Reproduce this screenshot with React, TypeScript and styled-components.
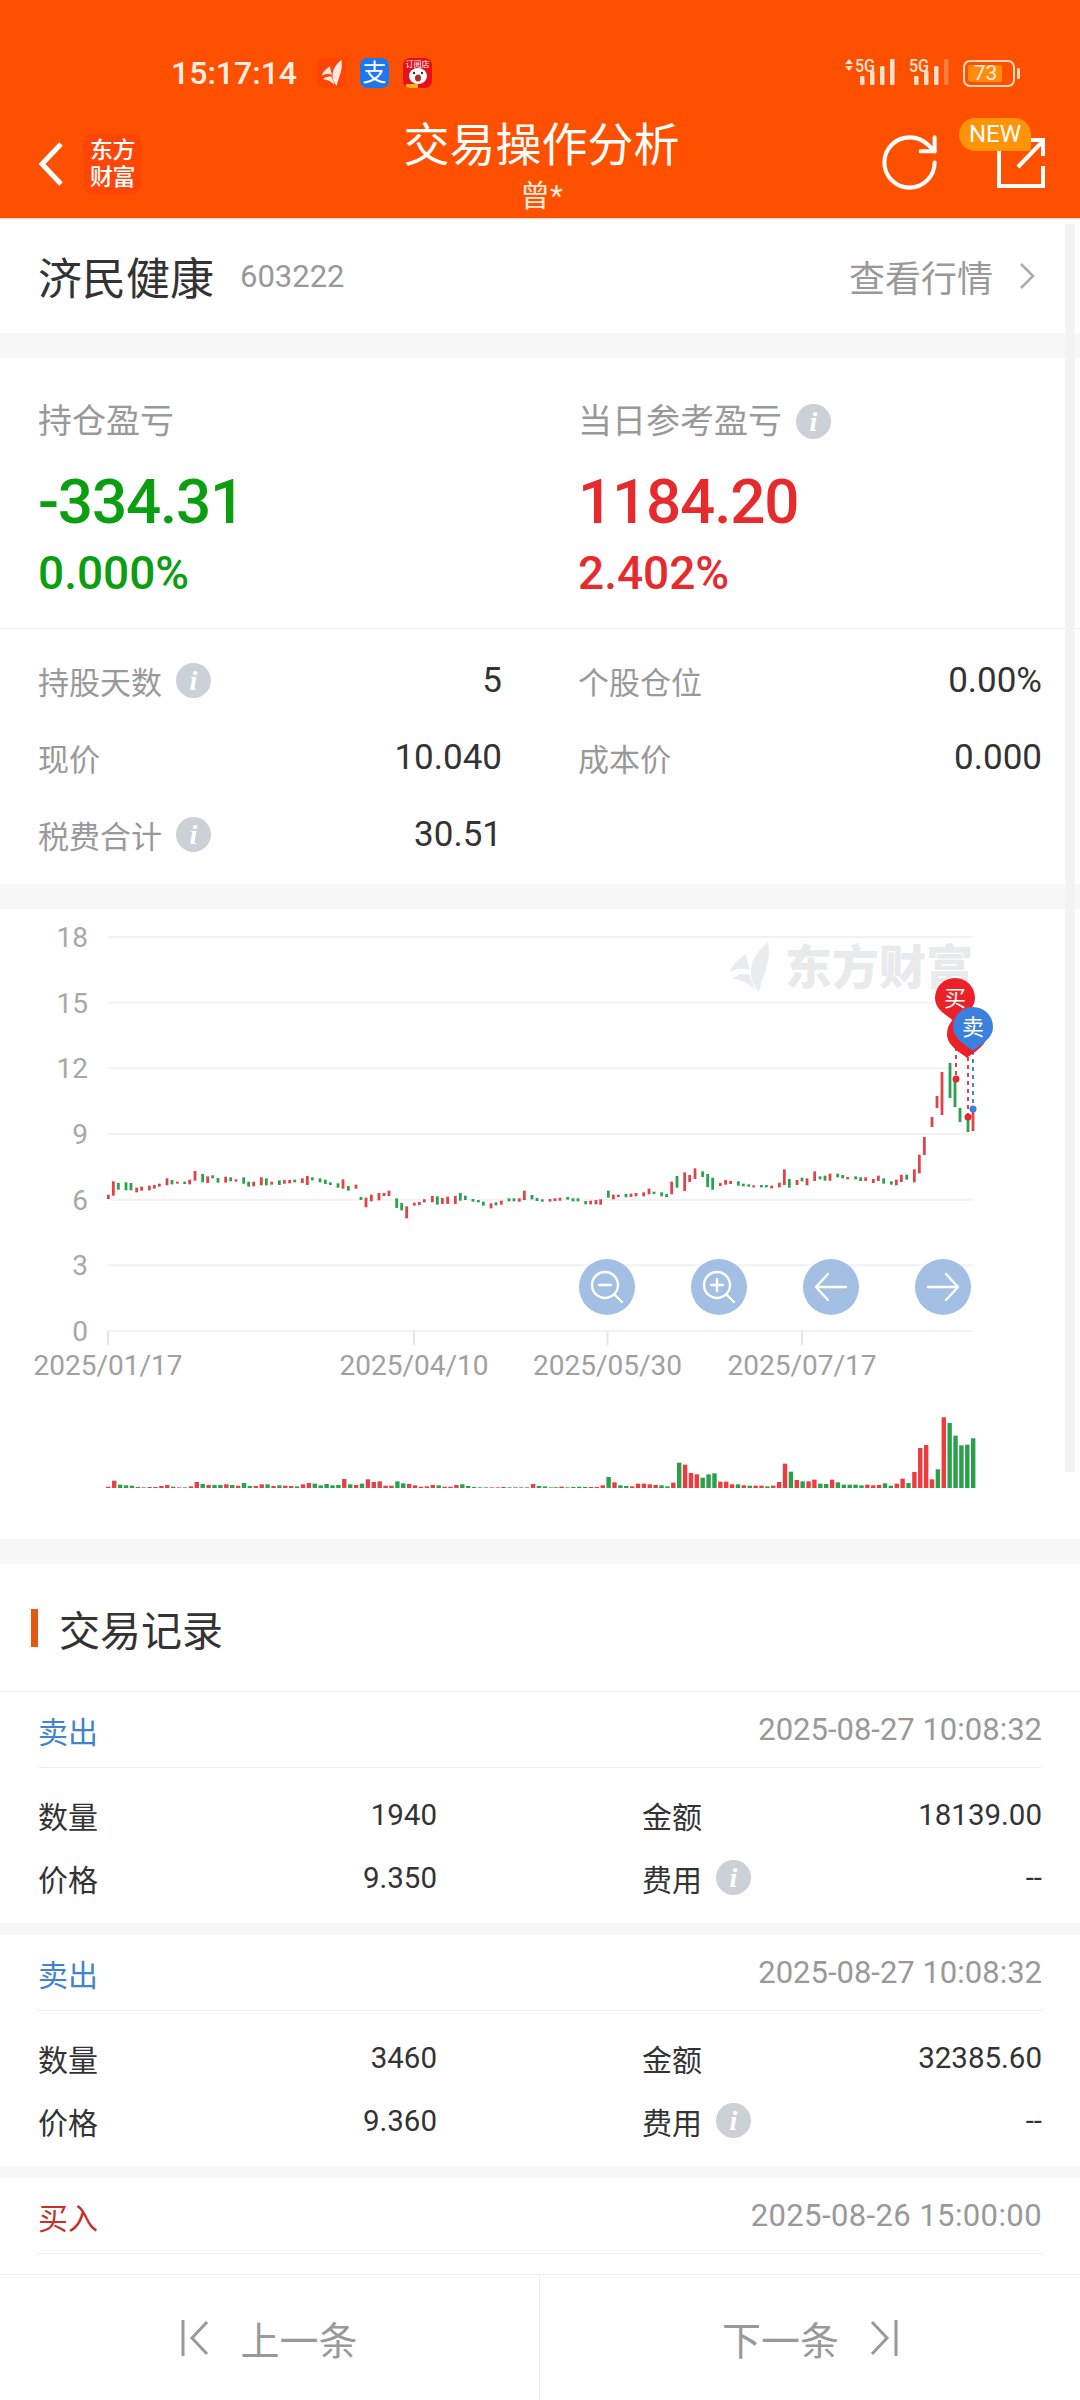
import React from "react";
import styled, { createGlobalStyle } from "styled-components";
import { RotateCw } from "lucide-react";

const Global = createGlobalStyle`
  html, body { margin: 0; padding: 0; background: #fff; }
  body { font-family: Roboto, "Noto Sans CJK SC", sans-serif; }
`;

const Page = styled.div`
  position: relative;
  width: 1080px;
  height: 2400px;
  overflow: hidden;
  display: flex;
  flex-direction: column;
  background: #fff;
`;
const Header = styled.header`
  flex: none;
  height: 219px;
  background: #ff5000;
  color: #fff;
  padding-top: 58px;
  box-sizing: border-box;
  border-bottom: 1px solid #ffd9b8;
`;
const StatusBar = styled.div`
  display: flex;
  align-items: center;
  height: 30px;
  padding: 0 65px 0 171px;
`;
const Clock = styled.span`
  font-size: 32px;
  font-weight: 500;
  color: #ffeee2;
  line-height: 30px;
  margin-right: 20px;
`;
const AppIcons = styled.div`
  display: flex;
  gap: 14px;
`;
const AppBadge = styled.div<{ $bg: string }>`
  width: 29px;
  height: 30px;
  border-radius: 7px;
  background: ${(p) => p.$bg};
  display: flex;
  align-items: center;
  justify-content: center;
  overflow: hidden;
  font-size: 24px;
  line-height: 30px;
  color: #fff;
`;
const StatusRight = styled.div`
  margin-left: auto;
  display: flex;
  align-items: center;
  gap: 8px;
`;
const SignalSvg = styled.svg`
  display: block;
  overflow: visible;
`;
const Battery = styled.div`
  position: relative;
  width: 52px;
  height: 27px;
  box-sizing: border-box;
  border: 2px solid #ffd9bd;
  border-radius: 7px;
  padding: 3px;
  display: flex;
`;
const BatteryFill = styled.div`
  width: 33px;
  background: #ff8c0f;
  border-radius: 2px;
  color: #ffeedd;
  font-size: 21px;
  line-height: 17px;
  text-align: center;
  padding-left: 1px;
`;
const BatteryNub = styled.div`
  position: absolute;
  right: -7px;
  top: 6px;
  width: 3px;
  height: 11px;
  background: #ffd9bd;
  border-radius: 1px;
`;
const Nav = styled.div`
  display: grid;
  grid-template-columns: 1fr auto 1fr;
  height: 100px;
  margin-top: 31px;
  padding: 0 35px 0 38px;
`;
const NavLeft = styled.div`
  display: flex;
  align-items: center;
  gap: 21px;
  padding-bottom: 11px;
`;
const NavLogo = styled.div`
  width: 57px;
  height: 60px;
  border-radius: 8px;
  background: #ff4608;
  display: flex;
  flex-direction: column;
  align-items: center;
  justify-content: center;
  font-size: 23px;
  line-height: 27px;
  font-weight: 500;
  letter-spacing: -0.5px;
`;
const NavCenter = styled.div`
  text-align: center;
`;
const NavTitle = styled.div`
  font-size: 46px;
  line-height: 52px;
`;
const NavSub = styled.div`
  font-size: 30px;
  line-height: 40px;
  margin-top: 5px;
  color: #ffe9da;
`;
const NavRight = styled.div`
  display: flex;
  align-items: center;
  justify-content: flex-end;
  padding-bottom: 14px;
  gap: 54px;
`;
const ShareWrap = styled.div`
  position: relative;
  width: 48px;
  height: 50px;
  margin-top: 2px;
`;
const NewBadge = styled.div`
  position: absolute;
  left: -38px;
  top: -20px;
  width: 72px;
  height: 33px;
  background: #ff9408;
  border-radius: 17px 17px 2px 17px;
  font-size: 24px;
  line-height: 33px;
  text-align: center;
  color: #fff;
`;
const Scrollbar = styled.div`
  position: absolute;
  right: 5px;
  top: 224px;
  width: 10px;
  height: 1248px;
  background: #f3f3f3;
`;
const Body = styled.main`
  flex: 1;
  min-height: 0;
  overflow: hidden;
  background: #f7f7f7;
`;
const NameRow = styled.section`
  height: 114px;
  background: #fff;
  display: flex;
  align-items: center;
  padding: 0 45px 0 38px;
  margin-bottom: 25px;
`;
const StockName = styled.span`
  font-size: 44px;
  color: #333;
`;
const StockCode = styled.span`
  font-size: 31px;
  color: #999;
  margin-left: 26px;
`;
const QuoteLink = styled.span`
  margin-left: auto;
  font-size: 36px;
  color: #999;
  margin-right: 26px;
`;
const Card = styled.section<{ $gap?: number }>`
  background: #fff;
  margin-bottom: ${(p) => p.$gap ?? 25}px;
`;
const TwoCols = styled.div`
  display: grid;
  grid-template-columns: 464px 464px;
  justify-content: space-between;
  padding: 0 38px;
`;
const TopStats = styled(TwoCols)`
  height: 271px;
  box-sizing: border-box;
  padding-top: 40px;
  border-bottom: 1px solid #eee;
`;
const StatLabel = styled.div`
  display: flex;
  align-items: center;
  gap: 14px;
  font-size: 34px;
  line-height: 46px;
  color: #999;
`;
const BigNum = styled.div<{ $c: string }>`
  font-size: 62px;
  font-weight: 500;
  line-height: 70px;
  margin-top: 23px;
  letter-spacing: -1.2px;
  color: ${(p) => p.$c};
`;
const Pct = styled.div<{ $c: string }>`
  font-size: 46px;
  font-weight: 500;
  line-height: 56px;
  margin-top: 8px;
  color: ${(p) => p.$c};
`;
const DetailGrid = styled(TwoCols)`
  padding-top: 13px;
  padding-bottom: 11px;
`;
const DetailRow = styled.div`
  display: flex;
  align-items: center;
  justify-content: space-between;
  height: 77px;
`;
const DetailLabel = styled.span`
  display: flex;
  align-items: center;
  gap: 14px;
  font-size: 31px;
  color: #999;
`;
const DetailValue = styled.span`
  font-size: 35px;
  color: #333;
`;
const InfoDot = styled.span`
  width: 35px;
  height: 35px;
  border-radius: 50%;
  background: #ccd1d8;
  color: #fff;
  font-family: "Liberation Serif", serif;
  font-style: italic;
  font-weight: 700;
  font-size: 28px;
  line-height: 35px;
  text-align: center;
  flex: none;
`;
const ChartCard = styled(Card)`
  position: relative;
  height: 630px;
`;
const ChartSvg = styled.svg`
  display: block;
`;
const ChartButtons = styled.div`
  position: absolute;
  left: 579px;
  top: 350px;
  display: flex;
  gap: 56px;
`;
const RoundBtn = styled.div`
  width: 56px;
  height: 56px;
  border-radius: 50%;
  background: #a3bfe3;
  display: flex;
  align-items: center;
  justify-content: center;
`;
const RecordsHead = styled.div`
  height: 128px;
  display: flex;
  align-items: center;
  padding: 1px 0 0 31px;
  box-sizing: border-box;
  border-bottom: 1px solid #eee;
`;
const TitleBar = styled.span`
  width: 7px;
  height: 38px;
  background: #e2590f;
  margin-right: 21px;
`;
const RecordsTitle = styled.span`
  font-size: 41px;
  color: #333;
`;
const Record = styled.article`
  background: #fff;
  margin-bottom: 12px;
  height: 231px;
  box-sizing: border-box;
  padding: 0 38px;
`;
const LastRecord = styled(Record)`
  height: 96px;
  margin-bottom: 0;
`;
const RecordTop = styled.div`
  height: 75px;
  display: flex;
  align-items: center;
  justify-content: space-between;
  border-bottom: 1px solid #eee;
`;
const Side = styled.span<{ $c: string }>`
  font-size: 30px;
  color: ${(p) => p.$c};
`;
const Stamp = styled.span<{ $spread?: number }>`
  font-size: 31px;
  color: #999;
  letter-spacing: ${(p) => p.$spread ?? 0}px;
`;
const RecordBody = styled.div`
  display: grid;
  grid-template-columns: 399px 400px;
  justify-content: space-between;
  padding-top: 15px;
`;
const RecRow = styled.div`
  display: flex;
  align-items: center;
  justify-content: space-between;
  height: 63px;
`;
const RecLabel = styled.span`
  display: flex;
  align-items: center;
  gap: 14px;
  font-size: 30px;
  color: #333;
`;
const RecValue = styled.span`
  font-size: 29.5px;
  color: #333;
`;
const BottomBar = styled.nav`
  flex: none;
  height: 126px;
  display: grid;
  grid-template-columns: 1fr 1fr;
  background: #fff;
  border-top: 1px solid #eee;
  box-sizing: border-box;
`;
const PagerBtn = styled.div<{ $line?: boolean }>`
  display: flex;
  align-items: center;
  justify-content: center;
  gap: 31px;
  font-size: 39px;
  color: #999;
  border-right: ${(p) => (p.$line ? "1px solid #eee" : "none")};
`;

const RED = "#e0434a";
const GREEN = "#2ba050";

// zoomed coordinates: [x, top, bottom, 1 = red / 0 = green]
const left: number[][] = [[25,227,240,1],[40,187,230,1],[55,192,212,0],[78,190,214,0],[93,192,214,0],[110,206,220,1],[125,203,215,1],[148,200,214,1],[163,198,209,1],[178,194,203,1],[201,178,199,1],[216,183,196,0],[232,188,194,1],[254,188,195,0],[269,182,196,1],[285,156,185,1],[308,165,190,0],[323,172,192,1],[338,169,178,0],[354,177,191,0],[377,173,191,1],[392,175,187,0],[408,181,188,1],[431,175,194,0],[446,188,203,0],[461,188,202,1],[484,175,199,1],[499,178,199,0],[515,188,197,1],[538,184,198,0],[553,183,194,1],[569,183,193,1],[584,182,190,0],[607,178,192,1],[622,171,198,1],[637,175,184,0],[660,178,190,0],[676,182,195,0],[691,190,198,0],[714,193,206,0],[729,181,209,1],[745,201,215,0],[768,197,209,1],[783,234,243,0],[798,236,265,1],[814,227,247,1],[837,222,244,1],[852,222,231,1],[867,215,231,1],[890,238,267,0],[905,252,274,0],[920,262,298,1],[943,251,260,1],[958,249,258,1],[973,241,250,1],[997,231,250,1],[1012,232,257,0],[1027,237,255,1],[1043,233,255,1],[1066,231,255,1],[1081,222,245,0],[1096,230,243,0],[1119,240,248,0],[1135,243,250,0],[1150,248,260,0],[1173,253,268,1],[1188,250,259,0],[1204,245,257,1],[1227,238,247,0],[1242,238,247,0],[1258,238,248,1],[1273,215,243,1],[1296,228,241,0],[1311,237,246,0],[1327,241,248,0],[1350,240,248,1],[1365,238,246,1],[1380,236,245,1],[1403,234,242,0],[1419,238,247,0],[1434,238,247,0],[1457,246,256,0],[1472,245,256,1],[1488,243,256,1]];
const right: number[][] = [[2,241,257,1],[25,215,236,0],[40,227,241,1],[55,227,234,1],[78,225,235,0],[93,224,234,1],[108,222,232,1],[131,220,232,1],[147,209,226,1],[162,218,225,0],[185,220,232,0],[200,225,234,0],[215,188,226,1],[231,171,206,0],[254,160,216,1],[269,168,189,1],[285,148,180,1],[308,157,174,0],[323,165,204,0],[338,176,212,0],[361,192,201,1],[377,183,197,1],[392,186,195,1],[415,187,200,0],[430,194,202,0],[446,196,203,0],[461,199,205,1],[484,198,205,0],[499,198,205,0],[515,200,208,1],[538,191,205,1],[553,151,198,1],[568,180,206,0],[591,183,198,1],[606,176,187,0],[621,178,199,1],[644,157,186,1],[660,172,181,0],[675,170,185,0],[690,164,185,1],[713,164,175,0],[728,168,178,0],[743,174,181,1],[767,172,181,0],[782,175,186,0],[797,175,186,1],[820,180,192,1],[835,170,186,1],[851,178,194,0],[874,187,197,0],[889,182,199,1],[904,167,189,1],[920,167,182,0],[943,151,190,1],[958,107,163,1],[973,54,108,1]];
const tail: number[][] = [[932,1118,1128,1],[937,1097,1109,1],[942,1073,1116,1],[950,1064,1099,0],[955,1077,1108,0],[960,1109,1123,0],[968,1120,1133,0],[973,1112,1132,1]];

const candles: number[][] = [
  ...left.map(([x, t, b, c]) => [100 + x / 3, 1120 + t / 3, 1120 + b / 3, c]),
  ...right.map(([x, t, b, c]) => [600 + x / 3, 1120 + t / 3, 1120 + b / 3, c]),
  ...tail,
];

const volLeft: number[][] = [[4,1],[22,1],[10,0],[8,0],[7,0],[3,1],[2,0],[3,1],[3,1],[6,1],[9,1],[4,0],[2,1],[2,0],[5,1],[18,1],[12,0],[9,1],[9,0],[9,0],[11,1],[9,0],[7,1],[15,0],[6,0],[6,1],[11,1],[11,0],[6,1],[8,0],[7,1],[6,1],[5,0],[11,1],[15,1],[13,0],[8,0],[12,0],[8,0],[9,0],[27,1],[11,0],[9,1],[13,0],[26,1],[18,1],[20,1],[7,1],[7,1],[20,0],[14,0],[12,1],[8,1],[4,1],[5,1],[9,1],[8,0],[4,1],[4,1],[9,1],[11,0],[6,0],[3,0],[2,0],[2,0],[2,1],[2,1],[3,1],[2,0],[2,1],[2,1],[2,0],[12,1],[6,0],[5,0],[2,0],[1,0]];
const volRight: number[][] = [[2,0],[4,1],[2,0],[3,0],[4,0],[3,0],[3,1],[3,1],[8,1],[33,0],[17,1],[8,0],[6,0],[5,1],[13,1],[13,1],[11,1],[9,1],[8,0],[5,0],[16,1],[76,0],[70,1],[45,1],[41,1],[31,0],[41,0],[44,0],[19,1],[19,1],[11,1],[11,0],[8,1],[7,0],[7,1],[7,1],[5,0],[7,1],[18,1],[73,1],[49,0],[24,1],[20,0],[20,1],[25,1],[13,0],[12,0],[25,1],[17,0],[10,0],[10,0],[10,0],[8,0],[10,1],[8,1],[9,1],[14,0],[7,0],[13,1],[28,1],[15,0],[48,1],[120,1],[129,1],[26,1],[56,0],[212,1],[195,0],[157,0],[128,0],[130,0],[149,0]];

const pin = (cx: number, cy: number) =>
  `M${cx} ${cy + 24}C${cx - 7} ${cy + 18} ${cx - 20} ${cy + 12} ${cx - 20} ${cy}A20 20 0 1 1 ${cx + 20} ${cy}C${cx + 20} ${cy + 12} ${cx + 7} ${cy + 18} ${cx} ${cy + 24}Z`;

const Wing = ({ x, y, s, c }: { x: number; y: number; s: number; c: string }) => (
  <g transform={`translate(${x} ${y}) scale(${s})`} fill={c}>
    <path d="M38 0C26 10 18 22 22 38C24 44 28 48 29 50C32 34 42 20 38 0Z" />
    <path d="M16 12C8 18 1 24 0 30C8 26 14 26 20 28C18 22 17 18 16 12Z" />
    <path d="M19 32C12 31 6 33 3 37C10 37 18 41 25 48C23 42 21 37 19 32Z" />
  </g>
);

const StatusStrength = ({ x }: { x: number }) => (
  <g fill="#ffe0cc">
    <rect x={x} y="75" width="4.5" height="9" rx="1" />
    <rect x={x + 10} y="70" width="4.5" height="14" rx="1" />
    <rect x={x + 20} y="65" width="4.5" height="19" rx="1" />
  </g>
);

function Chart() {
  const grid = [938, 1003.7, 1069.3, 1135, 1200.7, 1266.3, 1332];
  const labels = ["18", "15", "12", "9", "6", "3", "0"];
  const dates: [number, string][] = [[108, "2025/01/17"], [414, "2025/04/10"], [607.5, "2025/05/30"], [802, "2025/07/17"]];
  return (
    <ChartSvg width={1080} height={630} viewBox="0 910 1080 630">
      {grid.map((y, i) => (
        <g key={y}>
          <line x1={108} x2={973} y1={y} y2={y} stroke="#f3f3f3" strokeWidth={2} />
          <text x={88} y={y + 10} textAnchor="end" fontSize={28} fill="#a8a8a8" fontFamily="Roboto, sans-serif">{labels[i]}</text>
        </g>
      ))}
      {dates.map(([x, d]) => (
        <g key={d}>
          <line x1={x} x2={x} y1={1332} y2={1346} stroke="#e6e6e6" strokeWidth={2} />
          <text x={x} y={1376} textAnchor="middle" fontSize={28} fill="#a0a0a0" fontFamily="Roboto, sans-serif">{d}</text>
        </g>
      ))}
      <Wing x={730} y={943} s={1} c="#ebecee" />
      <text x={785} y={985} fontSize={47} fontWeight={900} fill="#e9eaec" fontFamily="'Noto Sans CJK SC', sans-serif">东方财富</text>
      {candles.map(([x, t, b, c], i) => (
        <rect key={i} x={x - 1.4} y={t} width={2.8} height={b - t} fill={c ? RED : GREEN} />
      ))}
      {volLeft.map(([h, c], i) => (
        <rect key={i} x={108.3 + i * 5.9 - 2.2} y={1489 - h / 3} width={4.4} height={h / 3} fill={c ? RED : GREEN} />
      ))}
      {volRight.map(([h, c], i) => (
        <rect key={i} x={555.7 + i * 5.88 - 2.2} y={1489 - h / 3} width={4.4} height={h / 3} fill={c ? "#ee3b3f" : "#2aa04a"} />
      ))}
      <line x1={956} x2={956} y1={1040} y2={1080} stroke="#e0434a" strokeWidth={2} strokeDasharray="4 4" />
      <line x1={968} x2={968} y1={1058} y2={1118} stroke="#e0434a" strokeWidth={2} strokeDasharray="4 4" />
      <line x1={973} x2={973} y1={1052} y2={1110} stroke="#4a86d8" strokeWidth={2} strokeDasharray="4 4" />
      <circle cx={956} cy={1080} r={3.5} fill="#e6282c" />
      <circle cx={968} cy={1118} r={3.5} fill="#e6282c" />
      <circle cx={973} cy={1110} r={3.5} fill="#3a80dc" />
      <path d={pin(967, 1035)} fill="#ec2027" />
      <path d={pin(955, 999)} fill="#ec2027" />
      <path d={pin(973, 1028)} fill="#3a80dc" />
      <g fill="#fff" fontSize={22} textAnchor="middle" fontFamily="'Noto Sans CJK SC', sans-serif">
        <text x={955} y={1007}>买</text>
        <text x={973} y={1036}>卖</text>
      </g>
    </ChartSvg>
  );
}

const Glass = ({ plus }: { plus?: boolean }) => (
  <svg width="40" height="40" viewBox="0 0 40 40" fill="none" stroke="#fff" strokeWidth="2.4" strokeLinecap="round">
    <circle cx="18" cy="18" r="13" />
    <path d="M28 28l7 7M12 18h12" />
    {plus && <path d="M18 12v12" />}
  </svg>
);
const Arrow = ({ dir }: { dir: 1 | -1 }) => (
  <svg width="36" height="32" viewBox="0 0 36 32" fill="none" stroke="#fff" strokeWidth="2.4" strokeLinecap="round" strokeLinejoin="round">
    <g transform={dir === 1 ? undefined : "translate(36 0) scale(-1 1)"}>
      <path d="M3 16h29M21 3l12 13-12 13" />
    </g>
  </svg>
);
const Info = () => <InfoDot>i</InfoDot>;

const PagerIcon = ({ flip }: { flip?: boolean }) => (
  <svg width="28" height="36" viewBox="0 0 28 36" fill="none" stroke="#999" strokeWidth="3">
    <g transform={flip ? "translate(28 0) scale(-1 1)" : undefined}>
      <path d="M2 0v36" />
      <path d="M26 2L11 18l15 16" />
    </g>
  </svg>
);

type Rec = { side: string; c: string; time: string; qty: string; amt: string; price: string };
const recs: Rec[] = [
  { side: "卖出", c: "#3f84cc", time: "2025-08-27 10:08:32", qty: "1940", amt: "18139.00", price: "9.350" },
  { side: "卖出", c: "#3f84cc", time: "2025-08-27 10:08:32", qty: "3460", amt: "32385.60", price: "9.360" },
];

export default function App() {
  return (
    <Page>
      <Global />
      <Header>
        <StatusBar>
          <Clock>15:17:14</Clock>
          <AppIcons>
            <AppBadge $bg="#ff4408">
              <svg width="24" height="26" viewBox="0 0 40 50"><Wing x={0} y={0} s={1} c="#ffeadd" /></svg>
            </AppBadge>
            <AppBadge $bg="#1c78f0">支</AppBadge>
            <AppBadge $bg="#e5101c">
              <svg width="29" height="30" viewBox="0 0 29 30">
                <text x="14.5" y="9" fontSize="8" fill="#fff" textAnchor="middle" fontFamily="'Noto Sans CJK SC', sans-serif">订阅店</text>
                <ellipse cx="15" cy="18" rx="9" ry="8" fill="#fff" />
                <ellipse cx="15" cy="20" rx="3" ry="3.5" fill="#b02a30" />
                <circle cx="11" cy="15" r="1.2" fill="#333" />
                <circle cx="19" cy="15" r="1.2" fill="#333" />
                <rect x="3" y="26" width="12" height="4" fill="#ffb020" />
              </svg>
            </AppBadge>
          </AppIcons>
          <StatusRight>
            <SignalSvg width="110" height="30" viewBox="845 57 110 30">
              <path d="M849 58L853 63H845ZM849 70L845 65H853Z" fill="#ffe0cc" />
              <text x="855" y="71" fontSize="19" textLength={20} lengthAdjust="spacingAndGlyphs" fontWeight="500" fill="#ffe0cc" fontFamily="Roboto, sans-serif">5G</text>
              <StatusStrength x={860} />
              <rect x="890" y="58" width="4.5" height="26" rx="1" fill="#ffe0cc" />
              <text x="909" y="71" fontSize="19" textLength={20} lengthAdjust="spacingAndGlyphs" fontWeight="500" fill="#ffe0cc" fontFamily="Roboto, sans-serif">5G</text>
              <StatusStrength x={914} />
              <rect x="944" y="58" width="4.5" height="26" rx="1" fill="#ffe0cc" opacity="0.3" />
            </SignalSvg>
            <Battery>
              <BatteryFill>73</BatteryFill>
              <BatteryNub />
            </Battery>
          </StatusRight>
        </StatusBar>
        <Nav>
          <NavLeft>
            <svg width="25" height="44" viewBox="0 0 25 44" fill="none" stroke="#fff" strokeWidth="5">
              <path d="M23 2L4 22l19 20" />
            </svg>
            <NavLogo>
              <span>东方</span>
              <span>财富</span>
            </NavLogo>
          </NavLeft>
          <NavCenter>
            <NavTitle>交易操作分析</NavTitle>
            <NavSub>曾*</NavSub>
          </NavCenter>
          <NavRight>
            <RotateCw size={67} strokeWidth={1.45} color="#fff" />
            <ShareWrap>
              <svg width="48" height="50" viewBox="0 0 48 50" fill="none" stroke="#fff" strokeWidth="4">
                <path d="M20 2H2v46h44V28" />
                <path d="M21 29L46 3M30 2h16v16" />
              </svg>
              <NewBadge>NEW</NewBadge>
            </ShareWrap>
          </NavRight>
        </Nav>
      </Header>
      <Body>
        <NameRow>
          <StockName>济民健康</StockName>
          <StockCode>603222</StockCode>
          <QuoteLink>查看行情</QuoteLink>
          <svg width="16" height="28" viewBox="0 0 16 28" fill="none" stroke="#aaa" strokeWidth="2.5">
            <path d="M2 2l12 12L2 26" />
          </svg>
        </NameRow>
        <Card>
          <TopStats>
            <div>
              <StatLabel>持仓盈亏</StatLabel>
              <BigNum $c="#0a9e10">-334.31</BigNum>
              <Pct $c="#0a9e10">0.000%</Pct>
            </div>
            <div>
              <StatLabel>当日参考盈亏<Info /></StatLabel>
              <BigNum $c="#e62b2f">1184.20</BigNum>
              <Pct $c="#e62b2f">2.402%</Pct>
            </div>
          </TopStats>
          <DetailGrid>
            <DetailRow><DetailLabel>持股天数<Info /></DetailLabel><DetailValue>5</DetailValue></DetailRow>
            <DetailRow><DetailLabel>个股仓位</DetailLabel><DetailValue>0.00%</DetailValue></DetailRow>
            <DetailRow><DetailLabel>现价</DetailLabel><DetailValue>10.040</DetailValue></DetailRow>
            <DetailRow><DetailLabel>成本价</DetailLabel><DetailValue>0.000</DetailValue></DetailRow>
            <DetailRow><DetailLabel>税费合计<Info /></DetailLabel><DetailValue>30.51</DetailValue></DetailRow>
          </DetailGrid>
        </Card>
        <ChartCard>
          <Chart />
          <ChartButtons>
            <RoundBtn><Glass /></RoundBtn>
            <RoundBtn><Glass plus /></RoundBtn>
            <RoundBtn><Arrow dir={-1} /></RoundBtn>
            <RoundBtn><Arrow dir={1} /></RoundBtn>
          </ChartButtons>
        </ChartCard>
        <Card $gap={0}>
          <RecordsHead>
            <TitleBar />
            <RecordsTitle>交易记录</RecordsTitle>
          </RecordsHead>
        </Card>
        {recs.map((r, i) => (
          <Record key={i}>
            <RecordTop>
              <Side $c={r.c}>{r.side}</Side>
              <Stamp>{r.time}</Stamp>
            </RecordTop>
            <RecordBody>
              <RecRow><RecLabel>数量</RecLabel><RecValue>{r.qty}</RecValue></RecRow>
              <RecRow><RecLabel>金额</RecLabel><RecValue>{r.amt}</RecValue></RecRow>
              <RecRow><RecLabel>价格</RecLabel><RecValue>{r.price}</RecValue></RecRow>
              <RecRow><RecLabel>费用<Info /></RecLabel><RecValue>--</RecValue></RecRow>
            </RecordBody>
          </Record>
        ))}
        <LastRecord>
          <RecordTop>
            <Side $c="#c9302c">买入</Side>
            <Stamp $spread={0.4}>2025-08-26 15:00:00</Stamp>
          </RecordTop>
        </LastRecord>
      </Body>
      <BottomBar>
        <PagerBtn $line><PagerIcon /><span>上一条</span></PagerBtn>
        <PagerBtn><span>下一条</span><PagerIcon flip /></PagerBtn>
      </BottomBar>
      <Scrollbar />
    </Page>
  );
}
